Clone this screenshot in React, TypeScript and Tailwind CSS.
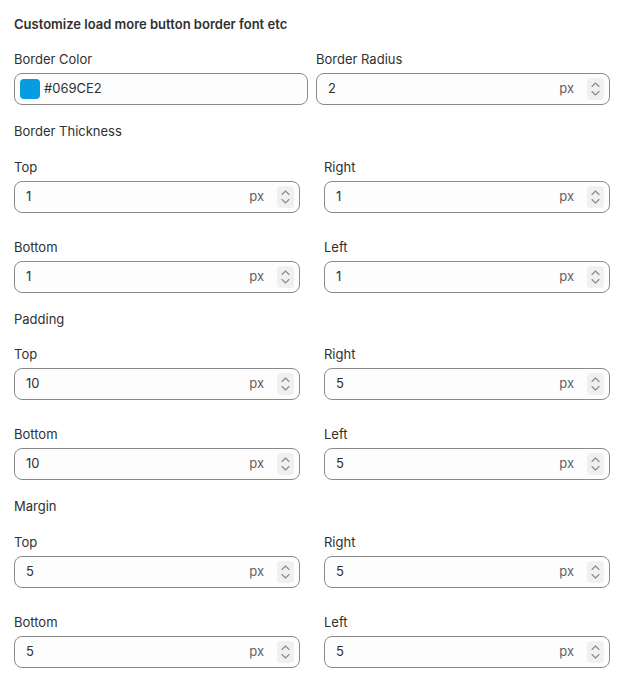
import React from "react";

function Stepper() {
  return (
    <div className="flex h-[22px] w-[17px] flex-col items-center justify-center gap-[4px] rounded-[4px] bg-[#f0f0f0]">
      <svg width="9" height="5" viewBox="0 0 9 5" fill="none">
        <path d="M1 4.5L4.5 1L8 4.5" stroke="#8a8a8a" strokeWidth="1.1" strokeLinecap="round" strokeLinejoin="round" />
      </svg>
      <svg width="9" height="5" viewBox="0 0 9 5" fill="none">
        <path d="M1 0.5L4.5 4L8 0.5" stroke="#8a8a8a" strokeWidth="1.1" strokeLinecap="round" strokeLinejoin="round" />
      </svg>
    </div>
  );
}

function NumberField({ label, value }: { label: string; value: string }) {
  return (
    <div className="flex flex-col gap-1">
      <label className="h-5 text-[13px] leading-5 text-[#303030]">{label}</label>
      <div className="flex h-8 items-center rounded-lg border border-[#8a8a8a] bg-[#fdfdfd] pl-[11px] pr-[5px]">
        <span className="flex-1 text-[13px] text-[#303030]">{value}</span>
        <span className="mr-[13px] text-[13px] text-[#616161]">px</span>
        <Stepper />
      </div>
    </div>
  );
}

function Group({
  title,
  values,
  tight,
}: {
  title: string;
  values: [string, string, string, string];
  tight?: boolean;
}) {
  return (
    <div className={tight ? "flex flex-col gap-[15px]" : "flex flex-col gap-4"}>
      <div className="h-5 text-[13px] leading-5 text-[#303030]">{title}</div>
      <div className="grid grid-cols-2 gap-x-6 gap-y-6">
        <NumberField label="Top" value={values[0]} />
        <NumberField label="Right" value={values[1]} />
        <NumberField label="Bottom" value={values[2]} />
        <NumberField label="Left" value={values[3]} />
      </div>
    </div>
  );
}

export default function App() {
  return (
    <div
      className="flex min-h-screen w-full flex-col gap-4 bg-white pl-[14px] pr-3 pt-[14px]"
      style={{ fontFamily: "Inter, 'Noto Sans', sans-serif" }}
    >
      <div className="h-5 text-[13px] font-semibold leading-5 text-[#303030]">
        Customize load more button border font etc
      </div>
      <div className="-mt-[1px] grid grid-cols-2 gap-2">
        <div className="flex flex-col gap-1">
          <label className="h-5 text-[13px] leading-5 text-[#303030]">Border Color</label>
          <div className="flex h-8 items-center gap-1 rounded-lg border border-[#8a8a8a] bg-[#fdfdfd] pl-[5px]">
            <span className="h-5 w-5 rounded-[4px] bg-[#069CE2]" />
            <span className="text-[13px] text-[#303030]">#069CE2</span>
          </div>
        </div>
        <NumberField label="Border Radius" value="2" />
      </div>
      <Group title="Border Thickness" values={["1", "1", "1", "1"]} />
      <Group title="Padding" values={["10", "5", "10", "5"]} tight />
      <Group title="Margin" values={["5", "5", "5", "5"]} />
    </div>
  );
}
